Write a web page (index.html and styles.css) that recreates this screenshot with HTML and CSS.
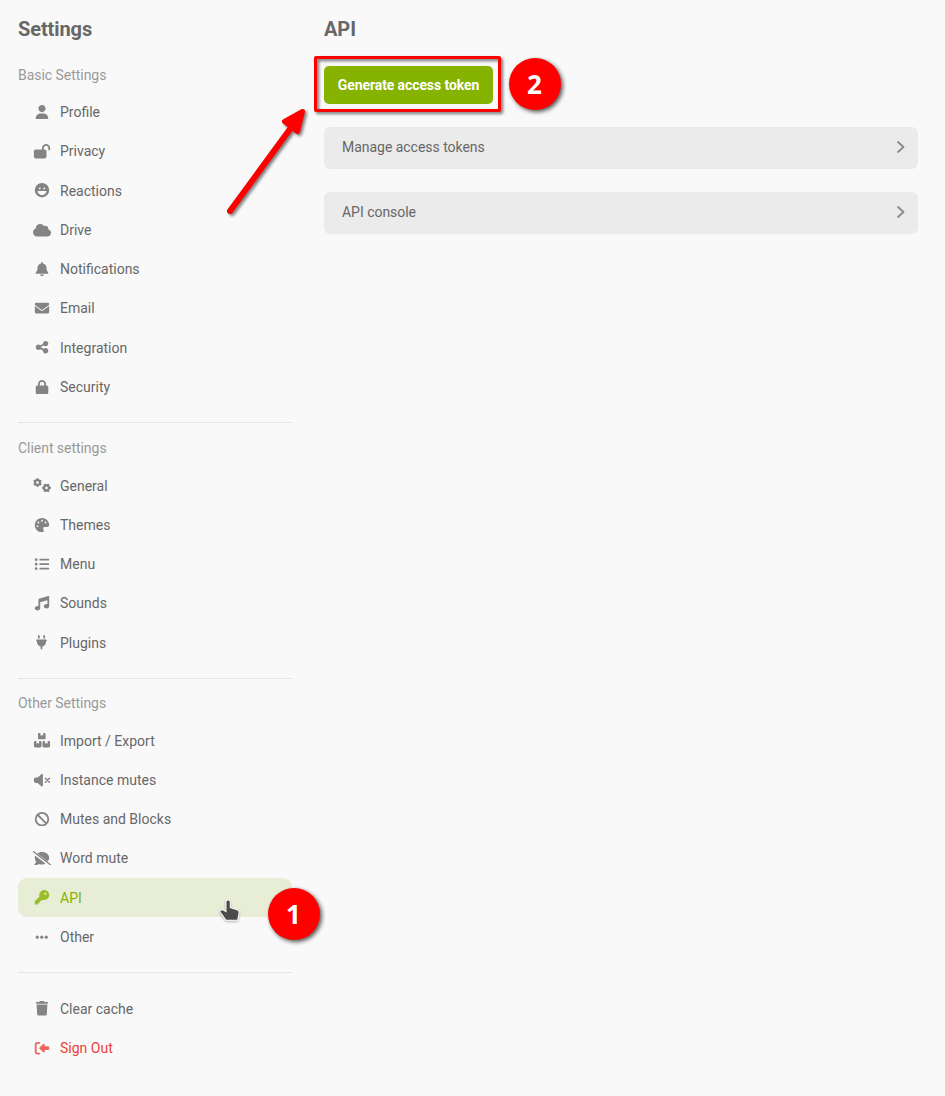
FILE: index.html
```html
<!DOCTYPE html>
<html lang="en">
<head>
<meta charset="utf-8">
<title>Settings - API</title>
<link rel="stylesheet" href="styles.css">
</head>
<body>
<div class="page">
  <nav class="sidebar">
    <h1 class="heading">Settings</h1>
    <section class="group first">
      <h2 class="group-title">Basic Settings</h2>
      <a class="item"><svg class="icon" viewBox="-96 0 640 512"><path d="M224 256c70.7 0 128-57.3 128-128S294.700 0 224 0 96 57.300 96 128s57.300 128 128 128zM274.700 304H173.300C77.600 304 0 381.600 0 477.300c0 19.100 15.500 34.700 34.700 34.700h378.700c19.100 0 34.600-15.500 34.600-34.700C448 381.600 370.400 304 274.700 304z"/></svg><span>Profile</span></a>
      <a class="item"><svg class="icon" viewBox="-32 0 640 512"><path d="M352 192H384C419.300 192 448 220.700 448 256V448C448 483.300 419.300 512 384 512H64C28.650 512 0 483.300 0 448V256C0 220.700 28.650 192 64 192H288V144C288 64.470 352.500 0 432 0C511.500 0 576 64.470 576 144V192C576 209.700 561.700 224 544 224C526.300 224 512 209.700 512 192V144C512 99.820 476.200 64 432 64C387.800 64 352 99.820 352 144V192z"/></svg><span>Privacy</span></a>
      <a class="item"><svg class="icon" viewBox="-64 0 640 512"><path fill-rule="evenodd" d="M0 256a256 256 0 1 1 512 0a256 256 0 1 1-512 0zM144 192a32 32 0 1 0 64 0a32 32 0 1 0-64 0zM304 192a32 32 0 1 0 64 0a32 32 0 1 0-64 0zM96.800 314.100c-3.800-13.700 7.400-26.100 21.600-26.100H393.600c14.200 0 25.500 12.400 21.600 26.100C396.200 382 332.100 432 256 432s-140.200-50-159.200-117.900z"/></svg><span>Reactions</span></a>
      <a class="item"><svg class="icon" viewBox="0 0 640 512"><path d="M0 336c0 79.500 64.500 144 144 144H512c70.700 0 128-57.300 128-128c0-61.900-44-113.600-102.400-125.400c4.100-10.700 6.400-22.400 6.400-34.600c0-53-43-96-96-96c-19.700 0-38.100 6-53.300 16.200C367 64.200 315.300 32 256 32C167.600 32 96 103.600 96 192c0 2.700 .1 5.400 .2 8.100C40.200 219.800 0 273.200 0 336z"/></svg><span>Drive</span></a>
      <a class="item"><svg class="icon" viewBox="-96 0 640 512"><path d="M224 0c-17.700 0-32 14.300-32 32V51.200C119 66 64 130.600 64 208v18.800c0 47-17.300 92.400-48.500 127.600l-7.400 8.300c-8.400 9.400-10.400 22.900-5.300 34.400S19.400 416 32 416H416c12.600 0 24-7.400 29.200-18.900s3.100-25-5.300-34.400l-7.400-8.300C401.300 319.200 384 273.900 384 226.800V208c0-77.400-55-142-128-156.800V32c0-17.700-14.300-32-32-32zm45.300 493.300c12-12 18.700-28.300 18.700-45.300H160c0 17 6.700 33.300 18.700 45.300s28.300 18.700 45.300 18.700s33.300-6.700 45.300-18.700z"/></svg><span>Notifications</span></a>
      <a class="item"><svg class="icon" viewBox="-64 0 640 512"><path d="M48 64C21.500 64 0 85.500 0 112c0 15.100 7.100 29.300 19.200 38.400L236.800 313.600c11.400 8.500 27 8.500 38.400 0L492.800 150.400c12.100-9.100 19.200-23.300 19.200-38.400c0-26.500-21.500-48-48-48H48zM0 176V384c0 35.300 28.700 64 64 64H448c35.300 0 64-28.700 64-64V176L294.400 339.200c-22.800 17.100-54 17.100-76.800 0L0 176z"/></svg><span>Email</span></a>
      <a class="item"><svg class="icon" viewBox="-96 0 640 512"><path d="M352 224c53 0 96-43 96-96s-43-96-96-96s-96 43-96 96c0 4 .2 8 .7 11.900l-94.100 47C145.400 170.200 121.900 160 96 160c-53 0-96 43-96 96s43 96 96 96c25.900 0 49.400-10.200 66.600-26.900l94.100 47c-.5 3.900-.7 7.800-.7 11.900c0 53 43 96 96 96s96-43 96-96s-43-96-96-96c-25.900 0-49.400 10.200-66.600 26.900l-94.100-47c.5-3.900 .7-7.800 .7-11.900s-.2-8-.7-11.900l94.100-47C302.600 213.800 326.100 224 352 224z"/></svg><span>Integration</span></a>
      <a class="item"><svg class="icon" viewBox="-96 0 640 512"><path d="M144 144v48H304V144c0-44.200-35.800-80-80-80s-80 35.800-80 80zM80 192V144C80 64.500 144.500 0 224 0s144 64.500 144 144v48h16c35.300 0 64 28.700 64 64V448c0 35.300-28.700 64-64 64H64c-35.300 0-64-28.700-64-64V256c0-35.300 28.700-64 64-64H80z"/></svg><span>Security</span></a>
    </section>
    <section class="group client">
      <h2 class="group-title">Client settings</h2>
      <a class="item"><svg class="icon" viewBox="0 0 640 512"><g fill="none" stroke="currentColor"><g id="gear"><circle cx="160" cy="162" r="88" stroke-width="80"/><path stroke-width="78" stroke-linecap="round" d="M160 60V40M160 264V284M248 111L266 101M72 111L54 101M248 213L266 223M72 213L54 223"/></g><use href="#gear" transform="rotate(30 480 352) translate(320 190)"/></g></svg><span>General</span></a>
      <a class="item"><svg class="icon" viewBox="-64 0 640 512"><path fill-rule="evenodd" d="M512 256c0 .9 0 1.800 0 2.700c-.4 36.500-33.600 61.300-70.100 61.300H344c-26.500 0-48 21.500-48 48c0 3.400 .4 6.700 1 9.900c2.100 10.200 6.500 20 10.800 29.900c6.100 13.800 12.100 27.500 12.100 42c0 31.800-21.600 60.700-53.400 62c-3.500 .1-7 .2-10.600 .2C114.600 512 0 397.400 0 256S114.600 0 256 0S512 114.600 512 256zM128 288a32 32 0 1 0-64 0a32 32 0 1 0 64 0zM160 160a32 32 0 1 0-64 0a32 32 0 1 0 64 0zM288 96a32 32 0 1 0-64 0a32 32 0 1 0 64 0zM416 160a32 32 0 1 0-64 0a32 32 0 1 0 64 0z"/></svg><span>Themes</span></a>
      <a class="item"><svg class="icon" viewBox="-64 0 640 512"><circle cx="48" cy="96" r="48"/><circle cx="48" cy="256" r="48"/><circle cx="48" cy="416" r="48"/><path fill="none" stroke="currentColor" stroke-width="64" stroke-linecap="round" d="M192 96H480M192 256H480M192 416H480"/></svg><span>Menu</span></a>
      <a class="item"><svg class="icon" viewBox="-64 0 640 512"><path d="M499.100 6.300c8.100 6 12.900 15.600 12.900 25.700v72V368c0 44.200-43 80-96 80s-96-35.800-96-80s43-80 96-80c11.200 0 22 1.600 32 4.600V147L192 223.800V432c0 44.200-43 80-96 80s-96-35.800-96-80s43-80 96-80c11.200 0 22 1.600 32 4.600V128c0-14.100 9.300-26.600 22.800-30.700l320-96c9.700-2.900 20.200-1.100 28.300 5z"/></svg><span>Sounds</span></a>
      <a class="item"><svg class="icon" viewBox="-110 0 640 512"><path d="M96 0C78.300 0 64 14.300 64 32v96h64V32c0-17.700-14.300-32-32-32zM288 0c-17.700 0-32 14.300-32 32v96h64V32c0-17.700-14.300-32-32-32zM32 160c-17.700 0-32 14.300-32 32s14.300 32 32 32v32c0 77.400 55 142 128 156.800V480c0 17.700 14.300 32 32 32s32-14.300 32-32V412.800C297 398 352 333.400 352 256V224c17.700 0 32-14.300 32-32s-14.300-32-32-32H32z"/></svg><span>Plugins</span></a>
    </section>
    <section class="group other">
      <h2 class="group-title">Other Settings</h2>
      <a class="item"><svg class="icon" viewBox="-32 0 640 512"><path id="box" d="M232 0H192c-26.500 0-48 21.500-48 48V176c0 26.500 21.500 48 48 48H368c26.500 0 48-21.500 48-48V48c0-26.500-21.500-48-48-48H328V96L280 72L232 96V0z"/><use href="#box" x="-144" y="288"/><use href="#box" x="160" y="288"/></svg><span>Import / Export</span></a>
      <a class="item"><svg class="icon" viewBox="-32 0 640 512"><path d="M301.100 34.800C312.600 40 320 51.400 320 64V448c0 12.600-7.400 24-18.900 29.200s-25 3.100-34.400-5.300L131.800 352H64c-35.300 0-64-28.700-64-64V224c0-35.300 28.700-64 64-64h67.800L266.700 40.100c9.400-8.400 22.900-10.400 34.400-5.300z"/><path fill="none" stroke="currentColor" stroke-width="50" stroke-linecap="round" d="M408 184L552 328M552 184L408 328"/></svg><span>Instance mutes</span></a>
      <a class="item"><svg class="icon" viewBox="-64 0 640 512"><g fill="none" stroke="currentColor" stroke-width="64"><circle cx="256" cy="256" r="224"/><path d="M98 98L414 414"/></g></svg><span>Mutes and Blocks</span></a>
      <a class="item"><svg class="icon" viewBox="0 0 640 512"><path d="M151 92C195 55 255 32 320 32c141 0 256 93 256 208c0 49-21 94-56 130zM82 165L441 447c-37 20-78 33-121 33c-38 0-74-7-107-19c-32 23-84 51-149 51c-16 0-22-18-12-29c21-23 48-61 57-101C79 343 64 294 64 240c0-27 6-52 18-75z"/><path fill="none" stroke="currentColor" stroke-width="48" stroke-linecap="round" d="M24 24L616 488"/></svg><span>Word mute</span></a>
      <a class="item active"><svg class="icon" viewBox="-64 0 640 512"><path fill-rule="evenodd" d="M336 352c97.200 0 176-78.800 176-176S433.200 0 336 0S160 78.800 160 176c0 18.700 2.900 36.800 8.300 53.700L7 391c-4.500 4.500-7 10.600-7 17v80c0 13.300 10.700 24 24 24h80c13.300 0 24-10.700 24-24V448h40c13.300 0 24-10.700 24-24V384h40c6.400 0 12.500-2.500 17-7l33.300-33.300c16.900 5.400 35 8.300 53.700 8.300zM376 96a40 40 0 1 1 0 80 40 40 0 1 1 0-80z"/></svg><span>API</span>
        <svg class="pointer" width="26" height="28" viewBox="0 0 26 28"><path d="M10.500 4.500C11 3.200 13.400 3.200 13.800 4.700V11L21 13.300C22.300 13.700 22.700 14.500 22.500 16L21.300 22.700H10.200C8 19.500 6.500 17.300 4.700 15.200C3.800 14 5.400 12.600 6.900 13.400L10.500 15.500Z"/></svg>
        <b class="badge one">1</b>
      </a>
      <a class="item"><svg class="icon" viewBox="-96 0 640 512"><circle cx="56" cy="256" r="56"/><circle cx="216" cy="256" r="56"/><circle cx="376" cy="256" r="56"/></svg><span>Other</span></a>
    </section>
    <section class="group last">
      <a class="item"><svg class="icon" viewBox="-96 0 640 512"><path d="M135.200 17.700L128 32H32C14.300 32 0 46.300 0 64S14.300 96 32 96H416c17.700 0 32-14.300 32-32s-14.300-32-32-32H320l-7.200-14.300C307.400 6.800 296.300 0 284.200 0H163.800c-12.100 0-23.200 6.800-28.600 17.700zM416 128H32L53.200 467c1.600 25.300 22.600 45 47.900 45H346.900c25.300 0 46.300-19.700 47.900-45L416 128z"/></svg><span>Clear cache</span></a>
      <a class="item danger"><svg class="icon" viewBox="-64 0 640 512"><path fill="none" stroke="currentColor" stroke-width="64" stroke-linecap="round" d="M160 64H96C61 64 32 93 32 128V384C32 419 61 448 96 448H160"/><path d="M168 232L300 108C322 92 352 106 352 132V188H472C494 188 512 206 512 228V284C512 306 494 324 472 324H352V380C352 406 322 420 300 404L168 280C154 266 154 246 168 232z"/></svg><span>Sign Out</span></a>
    </section>
  </nav>
  <main class="content">
    <h1 class="heading">API</h1>
    <div class="generate">
      <button class="primary">Generate access token</button>
      <div class="highlight"></div>
      <b class="badge two">2</b>
      <svg class="arrow" width="90" height="120" viewBox="220 100 90 120"><path d="M230 211L291.500 127" fill="none" stroke="#f00" stroke-width="6" stroke-linecap="round"/><path d="M302.500 111.500L284.500 121.500L297.500 131.500Z" fill="#f00" stroke="#f00" stroke-width="5" stroke-linejoin="round"/></svg>
    </div>
    <a class="panel"><span>Manage access tokens</span><svg class="chevron" width="10" height="14" viewBox="0 0 10 14"><path d="M2 2L7.500 7L2 12"/></svg></a>
    <a class="panel"><span>API console</span><svg class="chevron" width="10" height="14" viewBox="0 0 10 14"><path d="M2 2L7.500 7L2 12"/></svg></a>
  </main>
</div>
</body>
</html>
```
FILE: styles.css
```css
* { box-sizing: border-box; }
body {
  margin: 0;
  background: #f9f9f9;
  color: #676767;
  font: 14px/18px Roboto, sans-serif;
}
.page {
  display: flex;
  gap: 32px;
  min-height: 1096px;
  padding: 17px 27px 0 18px;
}
.sidebar { width: 274px; flex: none; }
.content { flex: 1; }
.heading {
  margin: 0;
  font-size: 20px;
  line-height: 24px;
  font-weight: 700;
  letter-spacing: -.1px;
}
.group {
  padding: 16px 0 15.600px;
  border-bottom: 1px solid #e4e4e4;
}
.first { padding-top: 25px; }
.last { border: 0; }
.group-title {
  margin: 0 0 8.500px;
  font-size: 14px;
  line-height: 18px;
  font-weight: 400;
  letter-spacing: -.04px;
  color: #999;
}
.client .group-title { margin-bottom: 8.900px; }
.other { padding-top: 15.600px; }
.item {
  position: relative;
  display: flex;
  align-items: center;
  gap: 9px;
  height: 39.250px;
  padding-left: 15px;
  border-radius: 9px;
}
.icon {
  width: 18px;
  height: 14.400px;
  fill: currentColor;
  opacity: .8;
}
.active { background: #e8eed5; color: #86b300; }
.danger { color: #ec4137; }
.generate {
  position: relative;
  display: flex;
  margin: 25px 0 23px;
}
.primary {
  width: 169px;
  height: 38px;
  padding: 0;
  border: 0;
  border-radius: 5px;
  background: #86b300;
  color: #fff;
  font: 700 14px/18px Roboto, sans-serif;
  letter-spacing: -.1px;
}
.highlight {
  position: absolute;
  left: -10px;
  top: -10px;
  width: 187px;
  height: 56px;
  border: 3px solid #f00;
  border-radius: 2px;
  filter: drop-shadow(2px 2px 1.500px rgba(0, 0, 0, .55));
}
.badge {
  position: absolute;
  width: 52px;
  height: 52px;
  border-radius: 50%;
  background: #f00;
  color: #fff;
  font: 700 26px/52px "Open Sans", sans-serif;
  text-align: center;
  box-shadow: 2px 2px 4px rgba(0, 0, 0, .65);
}
.one { left: 249.500px; top: 10.500px; z-index: 1; }
.two { left: 184.500px; top: -8.500px; }
.arrow {
  position: absolute;
  left: -104px;
  top: 34px;
  filter: drop-shadow(2px 2px 1.500px rgba(0, 0, 0, .5));
}
.pointer {
  position: absolute;
  left: 198px;
  top: 19px;
  z-index: 1;
  filter: drop-shadow(0 1px 1px rgba(0, 0, 0, .3));
}
.pointer path {
  fill: #4b4b4b;
  stroke: #fff;
  stroke-width: 2px;
  paint-order: stroke;
}
.panel {
  display: flex;
  justify-content: space-between;
  align-items: center;
  height: 42px;
  margin-bottom: 23px;
  padding: 0 12px 2px 18px;
  border-radius: 6px;
  background: #ebebeb;
  letter-spacing: -.03px;
}
.chevron path {
  fill: none;
  stroke: #898989;
  stroke-width: 1.800px;
  stroke-linecap: round;
  stroke-linejoin: round;
}
```
